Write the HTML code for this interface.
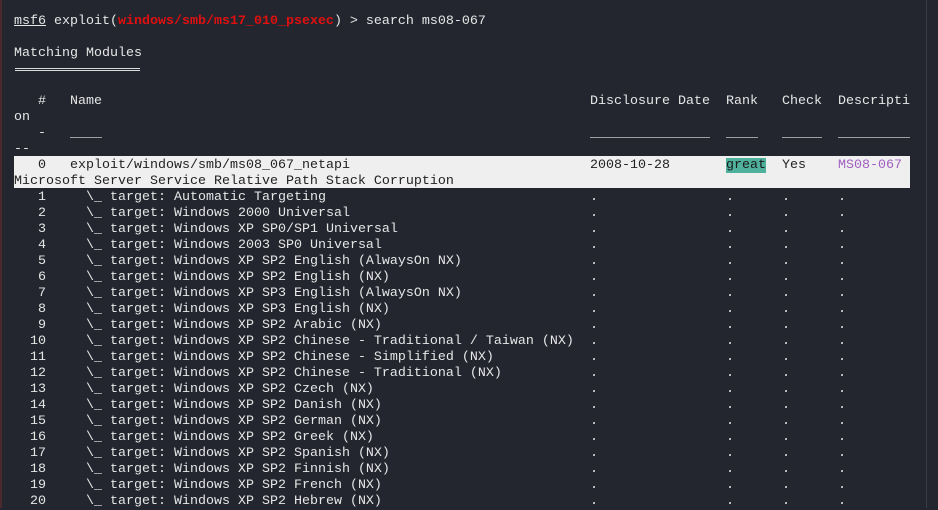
<html><head><style>
body{margin:0;width:938px;height:508px;background:#23262e;overflow:hidden;position:relative;font-family:"Liberation Mono",monospace;font-size:13.33px;color:#e6e6e6}
.l{position:absolute;height:16px;line-height:16px;white-space:pre}
.hl{position:absolute;left:14px;top:156px;width:896px;height:32px;background:#efefef}
</style></head><body>
<div style="position:absolute;left:0;top:0;width:2px;height:508px;background:#4a2a2e"></div>
<div style="position:absolute;left:926px;top:0;width:1px;height:508px;background:#3a3d44"></div>
<div class="hl"></div>
<div id="t"></div>
<script>
var t=document.getElementById('t'),h='';
function L(row,col,txt,st){h+='<div class="l" style="top:'+(14+row*16)+'px;left:'+(14+col*8)+'px;'+(st||'')+'">'+txt+'</div>';}
L(0,0,'<u>msf6</u> exploit(<b style="color:#e01010">windows/smb/ms17_010_psexec</b>) &gt; search ms08-067');
L(2,0,'Matching Modules');
h+='<div style="position:absolute;left:15px;top:68px;width:125px;height:1px;border-top:1px solid #ddd;border-bottom:1px solid #ddd"></div>';
L(5,3,'#');L(5,7,'Name');L(5,72,'Disclosure Date');L(5,89,'Rank');L(5,96,'Check');L(5,103,'Descripti');
L(6,0,'on');
L(7,3,'-');L(7,7,'____');L(7,72,'_______________');L(7,89,'____');L(7,96,'_____');L(7,103,'_________');
L(8,0,'--');
var k='color:#222';
L(9,3,'0',k);L(9,7,'exploit/windows/smb/ms08_067_netapi',k);L(9,72,'2008-10-28',k);
L(9,89,'<span style="background:#4fb19c;color:#1a1a1a">great</span>',k);L(9,96,'Yes',k);L(9,103,'MS08-067','color:#a05ec0');
L(10,0,'Microsoft Server Service Relative Path Stack Corruption',k);
var n=['Automatic Targeting','Windows 2000 Universal','Windows XP SP0/SP1 Universal','Windows 2003 SP0 Universal','Windows XP SP2 English (AlwaysOn NX)','Windows XP SP2 English (NX)','Windows XP SP3 English (AlwaysOn NX)','Windows XP SP3 English (NX)','Windows XP SP2 Arabic (NX)','Windows XP SP2 Chinese - Traditional / Taiwan (NX)','Windows XP SP2 Chinese - Simplified (NX)','Windows XP SP2 Chinese - Traditional (NX)','Windows XP SP2 Czech (NX)','Windows XP SP2 Danish (NX)','Windows XP SP2 German (NX)','Windows XP SP2 Greek (NX)','Windows XP SP2 Spanish (NX)','Windows XP SP2 Finnish (NX)','Windows XP SP2 French (NX)','Windows XP SP2 Hebrew (NX)'];
for(var i=0;i<n.length;i++){var r=11+i,s=String(i+1);L(r,s.length==1?3:2,s);L(r,9,'\\_ target: '+n[i]);L(r,72,'.');L(r,89,'.');L(r,96,'.');L(r,103,'.');}
t.innerHTML=h;
</script>
</body></html>
